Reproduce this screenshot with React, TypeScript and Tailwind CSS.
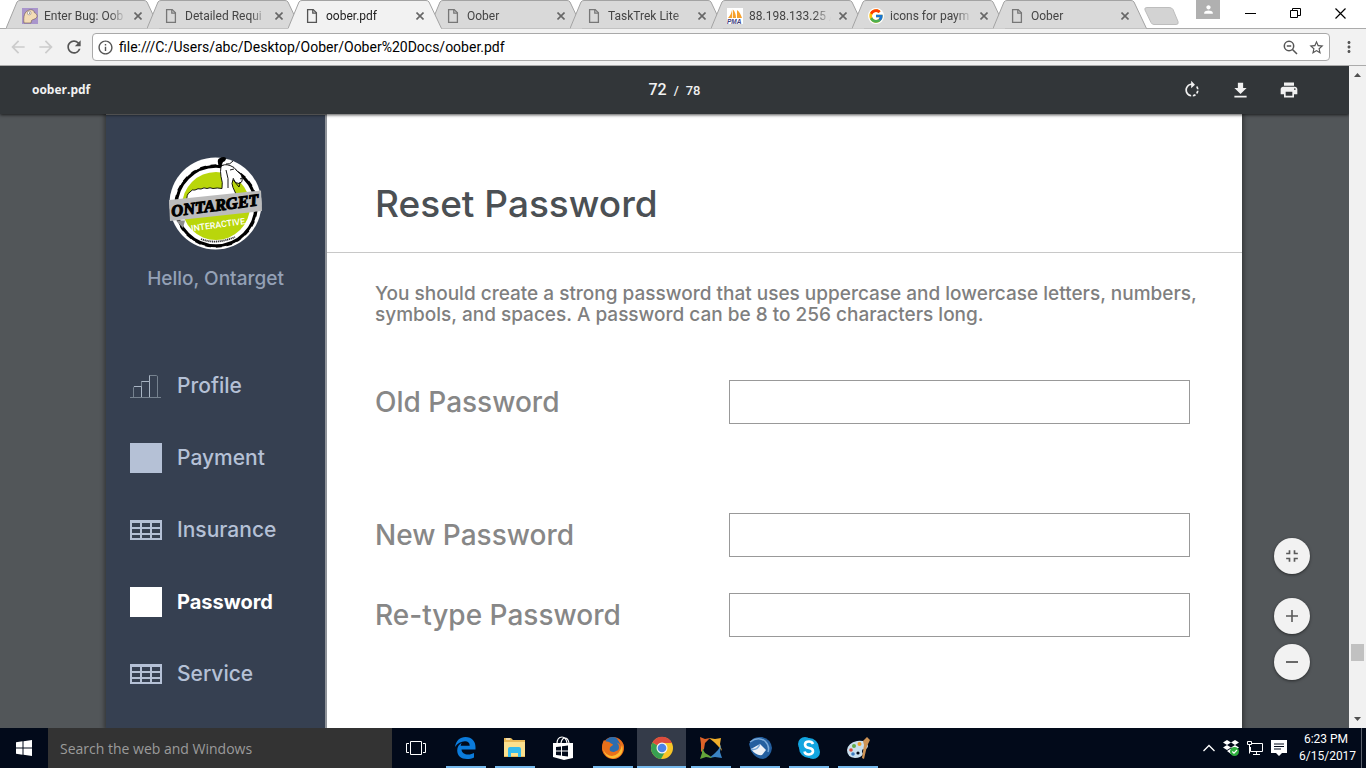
import type { ReactNode } from "react";
import { MdFileDownload, MdPrint, MdRotateRight, MdRefresh, MdArrowBack, MdArrowForward, MdStarBorder, MdFullscreenExit, MdInfoOutline, MdPerson, MdMoreVert } from "react-icons/md";
import { FcGoogle } from "react-icons/fc";

/* ---------- browser tabs ---------- */

function DocIcon() {
  return (
    <svg className="h-4 w-4" viewBox="0 0 16 16" fill="none" stroke="currentColor" strokeWidth="1.3">
      <path d="M3.6 1.6h5.6l3.2 3.2v9.6H3.6z" />
      <path d="M8.8 1.6v3.6h3.6" />
    </svg>
  );
}

function BugIcon() {
  return (
    <svg className="h-4 w-4" viewBox="0 0 16 16">
      <rect width="16" height="16" fill="#a995cc" />
      <path d="M2 15C1 8 3 3.500 6 2.600 8 1 12 1.500 12.300 4.500 15.500 6 16 9 13.500 10.500 11 12 10 11.500 9.500 12.500L9 15z" fill="#f3dcb6" stroke="#6d5a50" strokeWidth=".6" />
      <circle cx="7.200" cy="5" r="1.900" fill="#fff" stroke="#766" strokeWidth=".5" />
      <circle cx="7.500" cy="5" r=".6" fill="#333" />
    </svg>
  );
}

function PmaIcon() {
  return (
    <svg className="h-4 w-4" viewBox="0 0 16 16">
      <rect width="16" height="16" fill="#fff" />
      <path d="M1 10C3 8 4.500 5 5 2v8zM5.800 10V1.500C8 3 9 7 9 10zM10 10V2c2.500 1.500 4 5 5 8z" fill="#f6a02c" />
      <text x="0" y="15.800" fontSize="6.500" fontWeight="700" fontStyle="italic" fontFamily="Liberation Sans, sans-serif" fill="#3f3f80">PMA</text>
    </svg>
  );
}

function CloseIcon() {
  return (
    <svg className="h-2 w-2" viewBox="0 0 8 8" stroke="currentColor" strokeWidth="1.6">
      <path d="M.5.5l7 7M7.500.5l-7 7" />
    </svg>
  );
}

type TabInfo = { title: string; icon: ReactNode; active?: boolean };

const tabs: TabInfo[] = [
  { title: "Enter Bug: Oob", icon: <BugIcon /> },
  { title: "Detailed Requi", icon: <DocIcon /> },
  { title: "oober.pdf", icon: <DocIcon />, active: true },
  { title: "Oober", icon: <DocIcon /> },
  { title: "TaskTrek Lite", icon: <DocIcon /> },
  { title: "88.198.133.25 /", icon: <PmaIcon /> },
  { title: "icons for paym", icon: <span className="rounded-full bg-white"><FcGoogle size={16} /></span> },
  { title: "Oober", icon: <DocIcon /> },
];

function Tab({ tab }: { tab: TabInfo }) {
  const fill = tab.active ? "#f2f2f2" : "#d9d9d9";
  return (
    <div role="tab" aria-selected={!!tab.active} className={`relative -mr-[13px] flex h-[29px] w-[154px] shrink-0 items-center pt-0.5 pl-4 ${tab.active ? "z-10" : ""}`}>
      <svg className="absolute inset-0 h-full w-full" viewBox="0 0 154 29" preserveAspectRatio="none">
        <path d="M0 28.500L11 2Q12 .5 14 .5H138Q140 .5 141 2L153.500 28.500" fill={fill} stroke="#a3a3a3" />
        {tab.active && <rect x="0.500" y="28" width="152.500" height="1" fill="#f2f2f2" />}
      </svg>
      <span className={`relative flex w-[22px] shrink-0 ${tab.active ? "text-[#555]" : "text-[#777]"}`}>{tab.icon}</span>
      <span className={`relative w-[82px] overflow-hidden font-[Roboto,sans-serif] text-[12px] leading-4 whitespace-nowrap [mask-image:linear-gradient(to_right,black_80%,transparent)] ${tab.active ? "text-[#222]" : "text-[#444]"}`}>{tab.title}</span>
      <button aria-label={`Close ${tab.title}`} className="relative ml-1 flex h-4 w-4 items-center justify-center text-[#666]">
        <CloseIcon />
      </button>
    </div>
  );
}

function TabStrip() {
  return (
    <div className="flex h-7 items-start bg-white pl-1.5">
      <div role="tablist" className="flex">
        {tabs.map((t, i) => <Tab key={i} tab={t} />)}
      </div>
      <button aria-label="New tab" className="mt-[7px] ml-2.5">
        <svg className="h-[18px] w-[36px]" viewBox="0 0 36 18">
          <path d="M3 .5h22q3 0 4 2l5 12q1 3-2 3H10q-2 0-3-2L1 3Q0 .5 3 .5z" fill="#d3d3d3" stroke="#bdbdbd" />
        </svg>
      </button>
      <div className="ml-auto flex pr-[3px]">
        <button aria-label="Account" className="mr-2 flex h-[19px] w-6 items-center justify-center bg-[#b0b0b0] text-white"><MdPerson size={13} /></button>
        <button aria-label="Minimize" className="flex h-[27px] w-[45px] items-center justify-center">
          <svg className="h-[11px] w-[11px]" viewBox="0 0 11 11" stroke="#000"><path d="M0 5.500h11" /></svg>
        </button>
        <button aria-label="Restore" className="flex h-[27px] w-[45px] items-center justify-center">
          <svg className="h-[11px] w-[11px]" viewBox="0 0 11 11" fill="none" stroke="#000"><path d="M.5 2.500h7v7h-7zM2.500 2.500v-2h8v7h-3" /></svg>
        </button>
        <button aria-label="Close" className="flex h-[27px] w-[45px] items-center justify-center">
          <svg className="h-[11px] w-[11px]" viewBox="0 0 11 11" stroke="#000" strokeWidth="1.200"><path d="M.5.5l10 10M10.500.5l-10 10" /></svg>
        </button>
      </div>
    </div>
  );
}

function AddressBar() {
  return (
    <div className="flex h-[38px] items-center border-t border-b border-[#ababab] bg-[#f2f2f2] pr-2">
      <button aria-label="Back" className="ml-2 flex w-5 justify-center text-[#ccc]"><MdArrowBack size={20} /></button>
      <button aria-label="Forward" className="ml-2 flex w-5 justify-center text-[#ccc]"><MdArrowForward size={20} /></button>
      <button aria-label="Reload" className="ml-2 flex w-5 justify-center text-[#555]"><MdRefresh size={20} /></button>
      <div className="ml-2 flex h-7 flex-1 items-center rounded-sm border border-[#a9a9a9] bg-white px-1 text-[#555]">
        <MdInfoOutline size={17} />
        <input aria-label="Address" defaultValue="file:///C:/Users/abc/Desktop/Oober/Oober%20Docs/oober.pdf" className="ml-[5px] h-6 flex-1 bg-white font-[Roboto,sans-serif] text-[14px] text-black outline-none" />
        <button aria-label="Zoom out" className="mr-2.5">
          <svg className="h-[15px] w-[15px]" viewBox="0 0 15 15" fill="none" stroke="currentColor" strokeWidth="1.500">
            <circle cx="6" cy="6" r="4.700" />
            <path d="M9.500 9.500l4.500 4.500M3.800 6h4.400" />
          </svg>
        </button>
        <button aria-label="Bookmark"><MdStarBorder size={17} /></button>
      </div>
      <button aria-label="Menu" className="ml-2.5 text-[#555]"><MdMoreVert size={18} /></button>
    </div>
  );
}

/* ---------- PDF viewer ---------- */

function PdfToolbar() {
  return (
    <div className="relative z-10 grid h-12 shrink-0 grid-cols-[1fr_auto_1fr] items-center bg-[#323639] px-8 text-[#f1f1f1] shadow-[0_1px_3px_rgba(0,0,0,0.7)]">
      <h1 className="font-['Open_Sans',sans-serif] text-[12px] font-bold">oober.pdf</h1>
      <div className="flex items-baseline gap-[7px] font-[Roboto,sans-serif] text-[13px] font-medium">
        <span className="text-[16px]">72</span>
        <span>/</span>
        <span>78</span>
      </div>
      <div className="flex justify-end gap-7 pr-[18px]">
        <button aria-label="Rotate"><MdRotateRight size={20} /></button>
        <button aria-label="Download"><MdFileDownload size={21} /></button>
        <button aria-label="Print"><MdPrint size={20} /></button>
      </div>
    </div>
  );
}

function Logo() {
  return (
    <svg className="h-[94px] w-[94px]" viewBox="0 0 94 94" role="img" aria-label="Ontarget Interactive">
      <circle cx="46.500" cy="47.500" r="46" fill="#fff" />
      <circle cx="47" cy="50" r="40" fill="none" stroke="#000" strokeWidth="3.400" />
      <circle cx="47" cy="50" r="42" fill="none" stroke="#fff" strokeWidth="1.600" strokeDasharray="5 6" />
      <circle cx="47" cy="50" r="34" fill="#b9d60b" />
      <path d="M18 46Q17 38 21 36q2-3 5-2 3-2 6-1 3-2 6-.5 3-1.500 6 0 4-1 9 0 1-6-1-12-1-5 0-10 3-3 9-1l4 2q3 4 7 7 2 3 1 7l-3 2q-4 0-6-4-2 4 0 8 3 5 4 12z" fill="#fff" stroke="#000" strokeWidth=".9" />
      <path d="M49 7q-1-4 2-5 4-2 6 0 0 3-3 4-1 2-2 5-3-1-3-4z" fill="#000" />
      <path d="M57 8q4 1 7-3M61 14l4-1M71 23l2-1M64 22q2 5 6 9 1-3 1-5M57 14q3 8 2 18" fill="none" stroke="#000" strokeWidth=".9" />
      <path d="M0 44L92 34.500 93 55 1 65z" fill="#bcbcbc" />
      <path d="M7 64.500h9L14 72z" fill="#8d8d8d" />
      <g transform="rotate(-7.500 4 60)">
        <text x="3" y="60.500" fontSize="16.500" fontWeight="700" fontStyle="italic" fontFamily="Liberation Serif, serif" fill="#000" stroke="#000" strokeWidth="1.100">ONTARGET</text>
      </g>
      <g transform="rotate(-8 23 75)">
        <text x="22.500" y="75.500" fontSize="8.800" fontWeight="500" fontFamily="Roboto, sans-serif" fill="#fff">INTERACTIVE</text>
      </g>
      <path d="M32 83q15 6 34-2" fill="none" stroke="#333" strokeWidth="1.800" strokeDasharray="1.200 .7" />
    </svg>
  );
}

function BarsIcon() {
  return (
    <svg className="h-6 w-8" viewBox="0 0 32 24" fill="none" stroke="#76828f">
      <path d="M0 23.500h31M3.500 23V13.500Q3.500 12.500 5 12.500h6.500M11.500 23V7.500h8M19.500 23V1.500h7Q27.500 1.500 27.500 3v20" />
      <path d="M4 12.500h7.500V23M11.500 7.500h8v15.500M19.500 7V1.500" stroke="#a9b5c4" />
    </svg>
  );
}

function TableIcon() {
  return (
    <svg className="h-5 w-8" viewBox="0 0 32 20">
      <path d="M0 0h32v20H0z" fill="#b5c1d6" />
      <path d="M2 3h8v4H2zM12 3h8v4h-8zM22 3h8v4h-8zM2 9h8v4H2zM12 9h8v4h-8zM22 9h8v4h-8zM2 15h8v3H2zM12 15h8v3h-8zM22 15h8v3h-8z" fill="#364051" />
    </svg>
  );
}

const nav: { label: string; icon: ReactNode; active?: boolean }[] = [
  { label: "Profile", icon: <BarsIcon /> },
  { label: "Payment", icon: <span className="h-[30px] w-8 bg-[#b5c1d6]" /> },
  { label: "Insurance", icon: <TableIcon /> },
  { label: "Password", icon: <span className="h-[30px] w-8 bg-white" />, active: true },
  { label: "Service", icon: <TableIcon /> },
];

function Sidebar() {
  return (
    <aside className="flex w-[221px] shrink-0 flex-col border-t border-r-2 border-t-[#8d8d8d] border-r-[#8f9399] bg-[#364051] pt-[41px]">
      <div className="flex justify-center"><Logo /></div>
      <p className="mt-4 text-center text-[19px] leading-[26px] font-medium text-[#94a1b6]">Hello, Ontarget</p>
      <nav className="mt-[78px] flex flex-col gap-10 pl-6">
        {nav.map((n) => (
          <a key={n.label} href="#" className={`flex h-8 items-center gap-[15px] ${n.active ? "text-[20px] font-bold text-white" : "text-[21px] font-medium text-[#b5c1d6]"}`}>
            {n.icon}
            {n.label}
          </a>
        ))}
      </nav>
    </aside>
  );
}

function Field({ id, label, space }: { id: string; label: string; space: string }) {
  return (
    <div className={`flex items-center ${space}`}>
      <label htmlFor={id} className="w-[354px] shrink-0 text-[28px] leading-8 font-medium text-[#878787]">{label}</label>
      <input id={id} type="password" className="h-11 min-w-0 flex-1 border border-[#999] bg-white px-3 outline-none" />
    </div>
  );
}

function PdfPage() {
  return (
    <div className="mr-[107px] ml-[106px] flex flex-1 bg-white font-[Inter,sans-serif] shadow-[0_0_4px_2px_rgba(0,0,0,0.35)]">
      <Sidebar />
      <main className="min-w-0 flex-1">
        <header className="flex h-[139px] items-end border-b border-[#c8c8c8] pb-6 pl-12">
          <h2 className="text-[37px] leading-12 font-medium text-[#4b5054]">Reset Password</h2>
        </header>
        <form className="pt-[30px] pr-[52px] pl-12">
          <p className="text-[19px] leading-[21px] font-medium whitespace-nowrap text-[#7f7f7f]">
            You should create a strong password that uses uppercase and lowercase letters, numbers,
            <br />
            symbols, and spaces. A password can be 8 to 256 characters long.
          </p>
          <Field id="old" label="Old Password" space="mt-[55px]" />
          <Field id="new" label="New Password" space="mt-[89px]" />
          <Field id="retype" label="Re-type Password" space="mt-9" />
        </form>
      </main>
    </div>
  );
}

function RoundButton({ label, children }: { label: string; children: ReactNode }) {
  return (
    <button aria-label={label} className="flex h-9 w-9 items-center justify-center rounded-full bg-[#f2f2f2] text-[#5a5a5a] shadow-[0_1px_3px_rgba(0,0,0,0.5)]">
      {children}
    </button>
  );
}

function Viewer() {
  return (
    <div className="flex min-h-0 flex-1">
      <section className="relative flex min-w-0 flex-1 flex-col overflow-hidden bg-[#525659]">
        <PdfToolbar />
        <PdfPage />
        <div className="absolute right-[39px] bottom-12 flex flex-col">
          <RoundButton label="Fit to page"><MdFullscreenExit size={20} /></RoundButton>
          <div className="h-6" />
          <RoundButton label="Zoom in">
            <svg className="h-3 w-3" viewBox="0 0 12 12" stroke="currentColor" strokeWidth="1.600"><path d="M0 6h12M6 0v12" /></svg>
          </RoundButton>
          <div className="h-2.5" />
          <RoundButton label="Zoom out">
            <svg className="h-3 w-3" viewBox="0 0 12 12" stroke="currentColor" strokeWidth="1.800"><path d="M0 6h12" /></svg>
          </RoundButton>
        </div>
      </section>
      <div className="flex w-[17px] flex-col items-center bg-[#f1f1f1] py-[7px]">
        <svg className="h-1 w-[7px]" viewBox="0 0 7 4" fill="#505050"><path d="M0 4h7L3.500 0z" /></svg>
        <div className="flex-1" />
        <div className="mb-14 h-[17px] w-[13px] bg-[#c1c1c1]" />
        <svg className="h-1 w-[7px]" viewBox="0 0 7 4" fill="#505050"><path d="M0 0h7L3.500 4z" /></svg>
      </div>
    </div>
  );
}

/* ---------- taskbar ---------- */

const apps: { name: string; open: boolean; active?: boolean; icon: ReactNode }[] = [
  {
    name: "Edge", open: true,
    icon: <path d="M1 11C2 4.500 6 1 11.500 1 18 1 21.500 5.500 21.500 11v2.500H7.500c.3 3.500 3.200 5 6.500 5 2.500 0 4.500-.6 6-1.500v4.500c-2 1-4.500 1.500-7 1.500C7 23 3.200 19.500 3.200 14.500c0-3.500 1.800-6.300 5-8-1 1-1.300 2-1.500 3.300h9c0-3-1.600-4.500-4.700-4.500C7 5.300 3.500 7.500 1 11z" fill="#0b7bdb" />,
  },
  {
    name: "File Explorer", open: true,
    icon: <><path d="M1 2h7l2 2h12v17H1z" fill="#e8b958" /><path d="M1 6h21v14H1z" fill="#fbe08e" /><path d="M5 13q0-2 2-2h9q2 0 2 2v8h-3v-4H8v4H5z" fill="#35bbed" /><path d="M3 3h4" stroke="#fff" /></>,
  },
  {
    name: "Store", open: false,
    icon: <><path d="M1 7h20v15l-9 2-11-3z" fill="#fff" /><path d="M5 8q0-7 5-7 4 0 5 6M9 7q1-5 4-5 3 0 4 5" fill="none" stroke="#fff" strokeWidth="1.200" /><path d="M4 11l5-.6v4.100H4zM10 10.300l6-.8v5h-6zM4 15.500h5v4.100L4 19zM10 15.500h6v5l-6-.7z" fill="#020a1a" /></>,
  },
  {
    name: "Firefox", open: true,
    icon: <><circle cx="12" cy="12" r="11" fill="#dd5a12" /><circle cx="11.500" cy="9" r="8" fill="#2a6db0" /><path d="M3 4q1 1 2 1.500 3-.5 5 2 2 0 2 1.500-2 1-3 2.500-1 3 1 4 3 1 5-.5 3-.5 3-3.500 0-3-2-5 3 1 4 4Q18 4 15 2q7 2 8 9-1 10-10 12Q3 22 1 13 1 7 3 4z" fill="#e8701a" /><path d="M2 13q3 7 9 7 8-1 10-11Q24 20 12 22.500 4 22 2 13z" fill="#fdbb32" /></>,
  },
  {
    name: "Chrome", open: true, active: true,
    icon: <><circle cx="12" cy="12" r="11" fill="#f8c527" /><path d="M12 12L2.500 6.500A11 11 0 0 0 11 23l5-9z" fill="#38a052" /><path d="M12 12L2.500 6.500A11 11 0 0 1 22 7H12z" fill="#dc4c3e" /><circle cx="12" cy="12" r="5.500" fill="#f3f3f3" /><circle cx="12" cy="12" r="4.300" fill="#4b82e8" /></>,
  },
  {
    name: "Team Chat", open: true,
    icon: <><path d="M1 1l5 2 5-1-5 5-1 6-3 3L2 8z" fill="#df6228" /><path d="M10 2l6 1 6-1-1 6 2 7-4-5-4-4z" fill="#f0ae2a" /><path d="M22 9l-1 7 2 6-7-1-6 1 5-4 4-4z" fill="#3a83c4" /><path d="M3 12l3 5 5 3 2 2-6-1-6 2 2-6z" fill="#64a63a" /><circle cx="12" cy="12" r="6" fill="#020a1a" /></>,
  },
  {
    name: "Thunderbird", open: true,
    icon: <><path d="M1 8Q4 0 14 1q9 2 10 11-1 9-9 11-7 0-12-8z" fill="#245f9f" /><path d="M3 13l9-5 6 6-4 5q-6 1-11-6z" fill="#eef1f6" /><path d="M3 13q6 2 9-5M2 6q8-6 15-1 5 5 3 11" fill="none" stroke="#78a8d8" strokeWidth="1.500" /></>,
  },
  {
    name: "Skype", open: true,
    icon: <><circle cx="8" cy="8" r="7" fill="#12a5e0" /><circle cx="16" cy="16" r="7" fill="#12a5e0" /><circle cx="12" cy="12" r="10" fill="#12a5e0" /><path d="M16 8Q15 5.500 12 5.500 8 5.500 8 8.500t4 3.500 4 3.300-4 3.200q-4 0-4.500-3" fill="none" stroke="#fff" strokeWidth="2.600" /></>,
  },
  {
    name: "Paint", open: true,
    icon: <><path d="M1 14Q2 7 11 5q10-1 11 5-1 4-5 3-2 2 0 5-2 4-8 4-8-1-8-8z" fill="#c9dfee" /><circle cx="8" cy="10" r="2" fill="#62ad4a" /><circle cx="13.500" cy="8" r="2" fill="#f1a02b" /><circle cx="5" cy="14" r="1.800" fill="#d94b3b" /><circle cx="7" cy="18" r="1.800" fill="#3c7bc0" /><circle cx="12" cy="17" r="1.600" fill="#020a1a" /><path d="M16 22l2-13-1-4 4-4 3 3-3 6-3 13z" fill="#ce9354" /></>,
  },
];

function Taskbar() {
  return (
    <footer className="flex h-10 shrink-0 items-stretch bg-[#020a1a] font-['Open_Sans',sans-serif] text-white">
      <button aria-label="Start" className="flex w-12 items-center justify-center">
        <svg className="h-4 w-4" viewBox="0 0 16 16" fill="#fff"><path d="M0 2.200L6.500 1.300V7.500H0zM7.500 1.200L16 0v7.500H7.500zM0 8.500h6.500v6.200L0 13.800zM7.500 8.500H16V16l-8.500-1.200z" /></svg>
      </button>
      <input aria-label="Search" placeholder="Search the web and Windows" className="w-[344px] bg-[#333] px-3 text-[14px] text-white outline-none placeholder:text-[#9b9b9b]" />
      <button aria-label="Task view" className="mr-px flex w-12 items-center justify-center">
        <svg className="h-[14px] w-5" viewBox="0 0 20 14" fill="none" stroke="#fff"><path d="M4.500.5h11v13h-11zM3 2.500H.5v9H3M17 2.500h2.500v9H17" /></svg>
      </button>
      {apps.map((a) => (
        <button key={a.name} aria-label={a.name} className={`flex w-[49px] flex-col items-center ${a.active ? "bg-[#343b49]" : ""}`}>
          <svg className="mt-2 h-6 w-6" viewBox="0 0 24 24">{a.icon}</svg>
          <span className={`mt-auto h-0.5 ${a.active ? "w-full" : "w-10"} ${a.open ? "bg-[#76b9ed]" : ""}`} />
        </button>
      ))}
      <div className="ml-auto flex items-center gap-2">
        <svg className="h-4 w-3" viewBox="0 0 12 16" fill="none" stroke="#fff" strokeWidth="1.300"><path d="M.5 11L6 5.500 11.500 11" /></svg>
        <svg className="h-4 w-4" viewBox="0 0 16 16">
          <path d="M4 0l4 2.500L4 5 0 2.500zM12 0l4 2.500L12 5 8 2.500zM4 5l4 2.500L4 10 0 7.500zM12 5l4 2.500-4 2.500-4-2.500zM4 11l4-2.500 4 2.500-4 3z" fill="#fff" />
          <circle cx="11.500" cy="11.500" r="4.500" fill="#2fae3e" />
          <path d="M9.300 11.500l1.700 1.700 3-3.200" fill="none" stroke="#fff" strokeWidth="1.200" />
        </svg>
        <svg className="h-4 w-4" viewBox="0 0 16 16" fill="none" stroke="#fff"><path d="M5 3.500h10.500v8H3.500V7M9.500 11.500v3M6 14.500h7M.5 1.500h4v3h-4zM2.500 4.500v9" /></svg>
        <svg className="h-4 w-4" viewBox="0 0 16 16"><path d="M0 0h16v13h-5l-3 3-3-3H0z" fill="#fff" /><path d="M3 4h10M3 6.500h10M3 9h7" stroke="#020a1a" /></svg>
        <div className="ml-1 w-[54px] text-center font-[Roboto,sans-serif] text-[12px] leading-[17px] whitespace-nowrap">
          <div>6:23 PM</div>
          <div>6/15/2017</div>
        </div>
        <div className="mr-1 h-full border-l border-[#5a606c]" />
      </div>
    </footer>
  );
}

export default function App() {
  return (
    <div className="flex h-screen flex-col overflow-hidden bg-white">
      <TabStrip />
      <AddressBar />
      <Viewer />
      <Taskbar />
    </div>
  );
}
